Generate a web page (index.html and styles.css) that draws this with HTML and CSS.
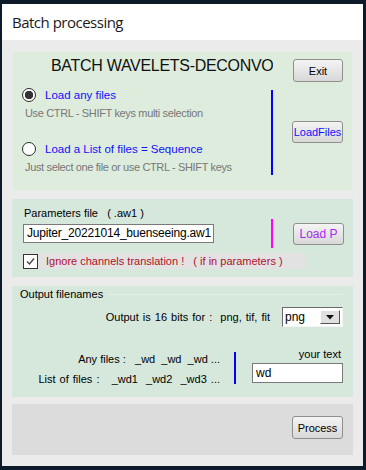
FILE: index.html
```html
<!DOCTYPE html>
<html>
<head>
<meta charset="utf-8">
<link rel="stylesheet" href="styles.css">
</head>
<body>
<div class="window">
  <header class="titlebar">Batch processing</header>
  <main class="client">
    <section class="panel p1">
      <div class="p1-head">
        <h1 class="title">BATCH WAVELETS-DECONVO</h1>
        <button class="btn exit">Exit</button>
      </div>
      <div class="p1-body">
        <div class="choices">
          <label class="radio-row"><span class="radio checked"></span><span class="blue">Load any files</span></label>
          <p class="hint">Use CTRL - SHIFT keys multi selection</p>
          <label class="radio-row second"><span class="radio"></span><span class="blue">Load a List of files = Sequence</span></label>
          <p class="hint">Just select one file or use CTRL - SHIFT keys</p>
        </div>
        <div class="vline blue-line"></div>
        <button class="btn loadfiles">LoadFiles</button>
      </div>
    </section>

    <section class="panel p2">
      <div class="param-label">Parameters file &nbsp; ( .aw1 )</div>
      <div class="param-row">
        <div class="textbox param-input">Jupiter_20221014_buenseeing.aw1</div>
        <div class="vline magenta-line"></div>
        <button class="btn loadp">Load P</button>
      </div>
      <div class="check-strip">
        <span class="checkbox"><svg viewBox="0 0 13 13" width="13" height="13"><path d="M3 6.5 L5.5 9 L10 3.5" fill="none" stroke="#444" stroke-width="1.3"/></svg></span>
        <span class="red">Ignore channels translation ! &nbsp; ( if in parameters )</span>
      </div>
    </section>

    <section class="panel p3">
      <div class="group-caption"><span>Output filenames</span><span class="group-line"></span></div>
      <div class="bits-row">
        <span class="bits-text">Output is 16 bits for :&nbsp; png, tif, fit</span>
        <div class="select"><span class="select-value">png</span><span class="select-btn"><svg viewBox="0 0 8 5" width="8" height="5"><path d="M0 0 H8 L4 4.5 Z" fill="#111"/></svg></span></div>
      </div>
      <div class="names-row">
        <div class="names">
          <div>Any files : &nbsp; _wd &nbsp;_wd &nbsp;_wd ...</div>
          <div class="list-line">List of files : &nbsp; _wd1 &nbsp;_wd2 &nbsp;_wd3 ...</div>
        </div>
        <div class="vline names-line"></div>
        <div class="yourtext">
          <div class="yt-label">your text</div>
          <div class="textbox yt-input">wd</div>
        </div>
      </div>
    </section>

    <section class="panel p4">
      <button class="btn process">Process</button>
    </section>
  </main>
</div>
</body>
</html>
```
FILE: styles.css
```css
* { box-sizing: border-box; }
html, body { margin: 0; padding: 0; }
body {
  background: #0d1a29;
  width: 366px;
  height: 470px;
  overflow: hidden;
  font-family: "Liberation Sans", Arial, sans-serif;
  font-size: 11px;
  color: #000;
}
.window {
  margin: 4px 3px 4px 2px;
  height: 462px;
  display: flex;
  flex-direction: column;
  background: #ebebeb;
}
.titlebar {
  height: 36px;
  background: #fff;
  font-family: "Open Sans", "Noto Sans", sans-serif;
  font-size: 15px;
  letter-spacing: -0.5px;
  color: #1a1a1a;
  padding-left: 10px;
  line-height: 37px;
}
.client {
  flex: 1;
  padding: 11px 10px 11px 10px;
  display: flex;
  flex-direction: column;
}
.panel {
  background: #d6e8dc;
}
.p1 {
  height: 140px;
  background: #deecde;
  border: 1px solid #e6efe6;
  padding: 7px 9px 0 9px;
}
.p1-head {
  display: flex;
  height: 23px;
  align-items: flex-start;
}
.title {
  margin: 0 0 0 29px;
  width: 222px;
  overflow: hidden;
  white-space: nowrap;
  font-size: 16px;
  letter-spacing: -0.3px;
  font-weight: normal;
  line-height: 13px;
  color: #111;
}
.btn {
  font-family: "Liberation Sans", Arial, sans-serif;
  font-size: 11px;
  padding: 0;
  border: 1px solid #8f8f8f;
  border-radius: 3px;
  background: linear-gradient(#f4f4f4, #e6e6e6 50%, #d8d8d8);
  color: #000;
}
.exit {
  margin-left: auto;
  width: 50px;
  height: 23px;
}
.p1-body {
  display: flex;
  margin-top: 6px;
  align-items: center;
}
.choices {
  flex: 1;
  align-self: flex-start;
}
.radio-row {
  display: flex;
  align-items: center;
  height: 14px;
  gap: 9px;
  font-size: 11.5px;
}
.radio-row.second { margin-top: 22px; }
.radio {
  width: 14px;
  height: 14px;
  border-radius: 50%;
  border: 1px solid #2a2a2a;
  background: #fff;
  flex: none;
}
.radio.checked {
  border-width: 1.5px;
  background: radial-gradient(circle, #333 0 4px, #fff 4.5px);
}
.blue { color: #1010ff; }
.hint {
  margin: 4px 0 0 3px;
  line-height: 14px;
  color: #777;
  letter-spacing: -0.35px;
}
.vline { width: 2px; flex: none; }
.blue-line {
  background: #0000ff;
  height: 85px;
  align-self: flex-start;
  margin-top: 2px;
}
.loadfiles {
  margin-left: 19px;
  width: 51px;
  height: 22px;
  color: #1010ff;
}
.p2 {
  margin-top: 8px;
  height: 78px;
  padding: 9px 9px 0 10px;
}
.param-label {
  height: 11px;
  line-height: 11px;
  margin-left: 2px;
}
.param-row {
  display: flex;
  align-items: center;
  height: 29px;
}
.textbox {
  background: #fff;
  border: 1px solid #7a7a7a;
  padding-left: 3px;
  white-space: nowrap;
  overflow: hidden;
}
.param-input {
  margin-left: 1px;
  width: 191px;
  height: 19px;
  line-height: 17px;
  font-size: 12px;
  letter-spacing: -0.2px;
}
.magenta-line {
  background: #ff00ff;
  height: 29px;
  margin-left: 57px;
}
.loadp {
  margin-left: 20px;
  width: 51px;
  height: 22px;
  color: #a62cf0;
  font-size: 12px;
}
.check-strip {
  margin-top: 5px;
  width: 283px;
  height: 16px;
  background: #e2e2e2;
  display: flex;
  align-items: center;
}
.checkbox {
  width: 15px;
  height: 15px;
  border: 1px solid #333;
  background: #fff;
  margin-left: 1px;
  display: flex;
  align-items: center;
  justify-content: center;
}
.red { color: #b0102c; margin-left: 8px; }
.p3 {
  margin-top: 9px;
  height: 111px;
  padding: 0 10px 0 0;
}
.group-caption {
  display: flex;
  align-items: center;
  height: 14px;
  margin-top: 1px;
  padding-left: 8px;
}
.group-line {
  flex: 1;
  height: 1px;
  background: #e3eee7;
  margin-left: 4px;
}
.bits-row {
  display: flex;
  justify-content: flex-end;
  align-items: center;
  margin-top: 6px;
  height: 20px;
}
.bits-text { word-spacing: 1px; }
.select {
  margin-left: 12px;
  width: 61px;
  height: 20px;
  background: #fff;
  border: 1px solid;
  border-color: #6a6a6a #f4f4f4 #f4f4f4 #6a6a6a;
  display: flex;
  align-items: center;
  padding: 0 2px 0 2px;
  font-size: 12px;
}
.select-value { flex: 1; }
.select-btn {
  width: 20px;
  height: 14px;
  background: #e0e0e0;
  border: 1px solid;
  border-color: #fff #555 #555 #fff;
  display: flex;
  align-items: center;
  justify-content: center;
}
.names-row {
  display: flex;
  align-items: flex-start;
  margin-top: 20px;
}
.names {
  width: 208px;
  text-align: right;
  line-height: 20px;
  margin-top: 2px;
}
.list-line { word-spacing: 1px; }
.names-line {
  background: #0000ff;
  height: 32px;
  margin: 5px 0 0 14px;
}
.yourtext {
  margin-left: 16px;
  width: 91px;
}
.yt-label {
  text-align: right;
  line-height: 14px;
  padding-right: 2px;
}
.yt-input {
  margin-top: 2px;
  height: 20px;
  line-height: 18px;
  font-size: 12px;
}
.p4 {
  margin-top: 7px;
  height: 51px;
  background: #dcdcdc;
  display: flex;
  justify-content: flex-end;
  align-items: flex-start;
  padding: 12px 10px 0 0;
}
.process {
  width: 51px;
  height: 23px;
}
```
